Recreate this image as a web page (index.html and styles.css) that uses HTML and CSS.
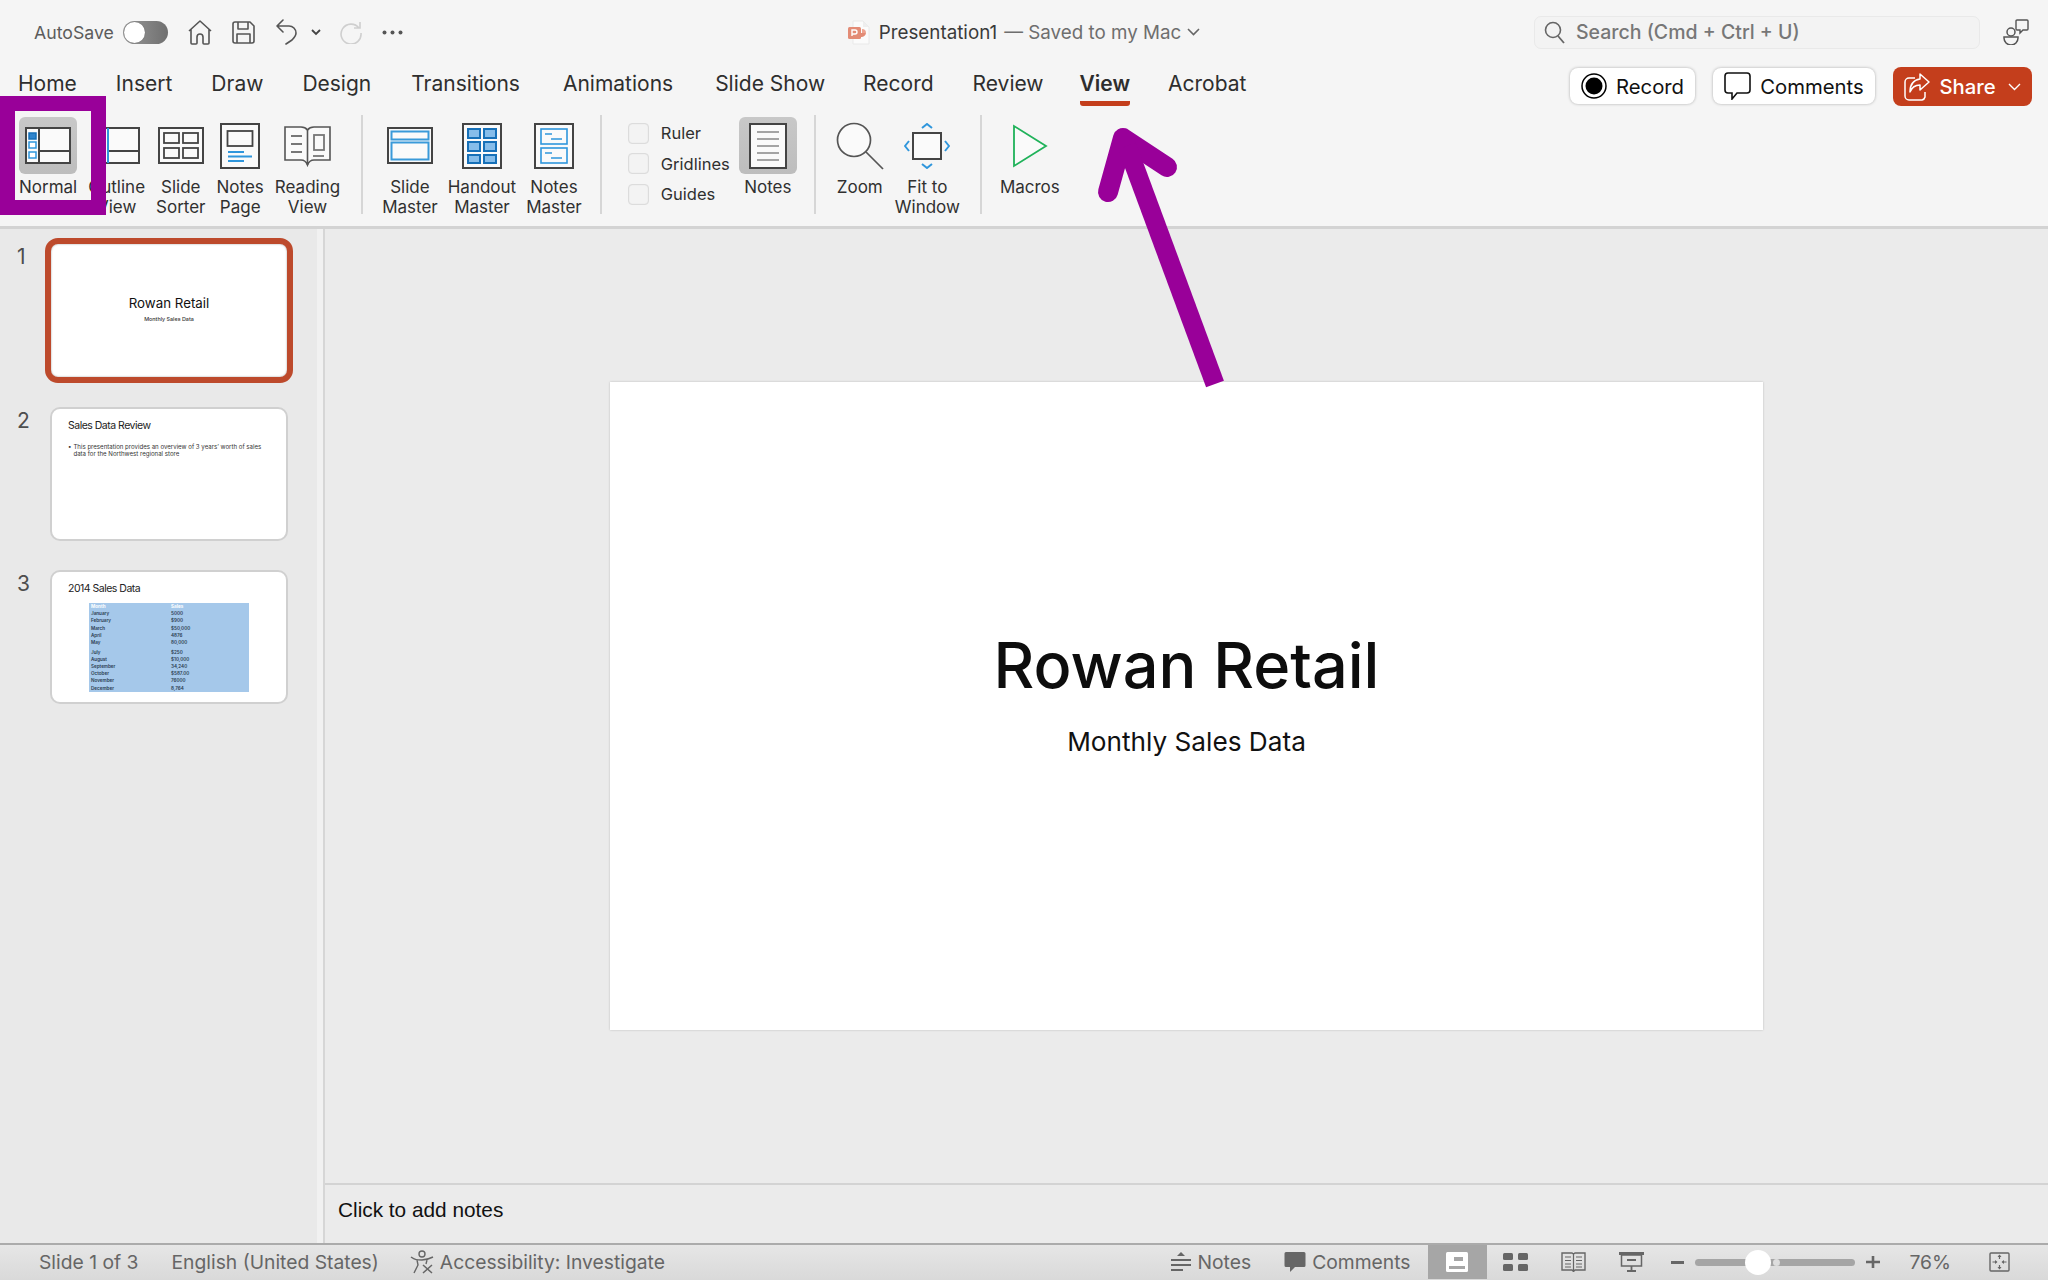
FILE: index.html
```html
<!DOCTYPE html>
<html lang="en">
<head>
<meta charset="utf-8">
<title>Presentation1</title>
<link rel="stylesheet" href="styles.css">
</head>
<body>
<div class="app">
  <header class="titlebar">
    <div class="tb-left">
      <span class="autosave">AutoSave</span>
      <span class="toggle"><span class="knob"></span></span>
      <svg class="ic" width="24" height="25" viewBox="0 0 24 25"><path d="M1 11 12 1l11 10M3 9v14a1 1 0 0 0 1 1h4a1 1 0 0 0 1-1v-6a3 3 0 0 1 6 0v6a1 1 0 0 0 1 1h4a1 1 0 0 0 1-1V9" fill="none" stroke="#555" stroke-width="1.6" stroke-linejoin="round"/></svg>
      <svg class="ic" width="23" height="23" viewBox="0 0 23 23"><path d="M3 1h15l4 4v15a2 2 0 0 1-2 2H3a2 2 0 0 1-2-2V3a2 2 0 0 1 2-2zM6 1v7h10V1M5 22v-9h13v9" fill="none" stroke="#555" stroke-width="1.6" stroke-linejoin="round"/></svg>
      <svg class="ic undo" width="23" height="26" viewBox="0 0 23 26"><path d="M8 1 2 7l6 6M2 7h12a7 7 0 0 1 7 7c0 3-2 5-4 7l-6 4" fill="none" stroke="#555" stroke-width="1.6" stroke-linecap="round" stroke-linejoin="round"/></svg>
      <svg class="ic undo-chev" width="10" height="7" viewBox="0 0 10 7"><path d="m1 1 4 4 4-4" fill="none" stroke="#444" stroke-width="1.8"/></svg>
      <svg class="ic" width="23" height="23" viewBox="0 0 23 23"><path d="M20 7a10 10 0 1 0 2 5M21 1v6h-6" fill="none" stroke="#cfcfcf" stroke-width="1.6"/></svg>
      <svg class="ic" width="21" height="5" viewBox="0 0 21 5"><circle cx="2.5" cy="2.5" r="2" fill="#555"/><circle cx="10.5" cy="2.5" r="2" fill="#555"/><circle cx="18.5" cy="2.5" r="2" fill="#555"/></svg>
    </div>
    <div class="tb-title">
      <svg class="ic" width="22" height="25" viewBox="0 0 22 25"><path d="M5 1h10l6 6v17H5z" fill="#fbfbfb" stroke="#e9e9e9"/><path d="M15 1v6h6" fill="#eee"/><rect x="0" y="7" width="13" height="12" rx="1.5" fill="#e38b75"/><path d="M4 16V10h3a2 2 0 0 1 0 4H4" fill="none" stroke="#fff" stroke-width="1.4"/><path d="M14 9a4 4 0 0 1 4 4h-4z" fill="#eda28f"/><path d="M13 13h5a4.500 4.500 0 0 1-5 4z" fill="#e38b75"/></svg>
      <span class="doc">Presentation1</span>
      <span class="saved">— Saved to my Mac</span>
      <svg class="ic" width="13" height="8" viewBox="0 0 13 8"><path d="m1 1 5.500 5.500L12 1" fill="none" stroke="#666" stroke-width="1.6"/></svg>
    </div>
    <div class="tb-right">
      <div class="search">
        <svg class="ic" width="21" height="23" viewBox="0 0 21 23"><circle cx="9" cy="9" r="7.500" fill="none" stroke="#666" stroke-width="1.600"/><path d="m14 15 6 7" stroke="#666" stroke-width="1.800"/></svg>
        <span>Search (Cmd + Ctrl + U)</span>
      </div>
      <svg class="ic" width="26" height="26" viewBox="0 0 26 26"><circle cx="8" cy="13" r="4" fill="none" stroke="#555" stroke-width="1.500"/><path d="M1 18h14v1a6.500 6.500 0 0 1-14 0z" fill="none" stroke="#555" stroke-width="1.500"/><path d="M14 1h10a1 1 0 0 1 1 1v8a1 1 0 0 1-1 1h-4l-3 3v-3h-3a1 1 0 0 1-1-1V2a1 1 0 0 1 1-1z" fill="none" stroke="#555" stroke-width="1.400"/></svg>
    </div>
  </header>

  <nav class="tabbar">
    <span class="tab">Home</span>
    <span class="tab">Insert</span>
    <span class="tab">Draw</span>
    <span class="tab">Design</span>
    <span class="tab tab-transitions">Transitions</span>
    <span class="tab tab-animations">Animations</span>
    <span class="tab tab-show">Slide Show</span>
    <span class="tab tab-record">Record</span>
    <span class="tab">Review</span>
    <span class="tab tab-view active">View</span>
    <span class="tab tab-acrobat">Acrobat</span>
    <div class="actions">
      <button class="act act-record">
        <svg width="26" height="26" viewBox="0 0 26 26"><circle cx="13" cy="13" r="12" fill="#fff" stroke="#000" stroke-width="1.500"/><circle cx="13" cy="13" r="8.500" fill="#000"/></svg>
        Record
      </button>
      <button class="act act-comments">
        <svg width="27" height="28" viewBox="0 0 27 28"><path d="M4 1h19a3 3 0 0 1 3 3v14a3 3 0 0 1-3 3H13l-5 6v-6H4a3 3 0 0 1-3-3V4a3 3 0 0 1 3-3z" fill="#fff" stroke="#111" stroke-width="1.600"/></svg>
        Comments
      </button>
      <button class="act act-share">
        <svg width="26" height="28" viewBox="0 0 26 28"><path d="M11 5H5a4 4 0 0 0-4 4v14a4 4 0 0 0 4 4h13a4 4 0 0 0 3-3v-5" fill="none" stroke="#fff" stroke-width="1.500"/><path d="M16 1v5C9 7 6 12 6 19c2-5 5-7 10-7v5l9-8z" fill="none" stroke="#fff" stroke-width="1.500" stroke-linejoin="round"/></svg>
        Share
        <svg class="share-chev" width="13" height="8" viewBox="0 0 13 8"><path d="m1 1 5.500 5.500L12 1" fill="none" stroke="#fff" stroke-width="1.400"/></svg>
      </button>
    </div>
  </nav>

  <section class="ribbon">
    <div class="rb-group">
      <div class="rb-btn">
        <div class="rb-icon on">
          <svg width="46" height="37" viewBox="0 0 46 37"><rect x="1" y="1" width="44" height="35" fill="#fafafa" stroke="#444" stroke-width="2"/><path d="M14 1v35M14 24h31" stroke="#444" stroke-width="2"/><rect x="4" y="6" width="7" height="6" fill="#2f84cc" stroke="#1670b8" stroke-width="1.500"/><rect x="4" y="15" width="7" height="6" fill="#fff" stroke="#2f96dc" stroke-width="1.500"/><rect x="4" y="25" width="7" height="6" fill="#fff" stroke="#2f96dc" stroke-width="1.500"/></svg>
        </div>
        <span class="rb-label">Normal</span>
      </div>
      <div class="rb-btn">
        <div class="rb-icon">
          <svg width="46" height="37" viewBox="0 0 46 37"><rect x="1" y="1" width="44" height="35" fill="#fafafa" stroke="#444" stroke-width="2"/><path d="M14 1v35" stroke="#2f96dc" stroke-width="2"/><path d="M15 24h30" stroke="#444" stroke-width="2"/></svg>
        </div>
        <span class="rb-label">Outline<br>View</span>
      </div>
      <div class="rb-btn">
        <div class="rb-icon">
          <svg width="46" height="37" viewBox="0 0 46 37"><rect x="1" y="1" width="44" height="35" fill="#fafafa" stroke="#444" stroke-width="2"/><g fill="#fafafa" stroke="#444" stroke-width="1.800"><rect x="6" y="6" width="15" height="10"/><rect x="25" y="6" width="15" height="10"/><rect x="6" y="21" width="15" height="10"/><rect x="25" y="21" width="15" height="10"/></g></svg>
        </div>
        <span class="rb-label">Slide<br>Sorter</span>
      </div>
      <div class="rb-btn">
        <div class="rb-icon">
          <svg width="40" height="46" viewBox="0 0 40 46"><rect x="1" y="1" width="38" height="44" fill="#fafafa" stroke="#444" stroke-width="2"/><rect x="7.500" y="8" width="25" height="15" fill="#fafafa" stroke="#444" stroke-width="1.800"/><path d="M8 29h16M8 33.500h24M8 38h16" stroke="#2f96dc" stroke-width="1.800"/></svg>
        </div>
        <span class="rb-label">Notes<br>Page</span>
      </div>
      <div class="rb-btn">
        <div class="rb-icon">
          <svg width="47" height="42" viewBox="0 0 47 42"><path d="M1 2h16c3 0 5 1 6.500 3C25 3 27 2 30 2h16v33H30c-3 0-5 1-6.500 5C22 36 20 35 17 35H1z" fill="#fafafa" stroke="#555" stroke-width="1.600"/><path d="M23.500 5v35" stroke="#555" stroke-width="1.600"/><path d="M7 11h11M7 19h11M7 27h11" stroke="#777" stroke-width="1.800"/><rect x="30" y="10" width="10" height="15" fill="#fafafa" stroke="#777" stroke-width="1.800"/><path d="M29 31h11" stroke="#777" stroke-width="1.800"/></svg>
        </div>
        <span class="rb-label">Reading<br>View</span>
      </div>
    </div>
    <div class="rb-sep"></div>
    <div class="rb-group rb-master">
      <div class="rb-btn">
        <div class="rb-icon">
          <svg width="46" height="37" viewBox="0 0 46 37"><rect x="1" y="1" width="44" height="35" fill="#fafafa" stroke="#444" stroke-width="2"/><g fill="#fafafa" stroke="#3a9ad9" stroke-width="2"><rect x="4.500" y="4.500" width="37" height="8"/><rect x="4.500" y="15.500" width="37" height="17"/></g></svg>
        </div>
        <span class="rb-label">Slide<br>Master</span>
      </div>
      <div class="rb-btn">
        <div class="rb-icon">
          <svg width="40" height="46" viewBox="0 0 40 46"><rect x="1" y="1" width="38" height="44" fill="#fafafa" stroke="#444" stroke-width="2"/><g fill="#86bdea" stroke="#1670b8" stroke-width="2"><rect x="6" y="6" width="12" height="9"/><rect x="22" y="6" width="12" height="9"/><rect x="6" y="19" width="12" height="9"/><rect x="22" y="19" width="12" height="9"/><rect x="6" y="32" width="12" height="8"/><rect x="22" y="32" width="12" height="8"/></g></svg>
        </div>
        <span class="rb-label">Handout<br>Master</span>
      </div>
      <div class="rb-btn">
        <div class="rb-icon">
          <svg width="40" height="46" viewBox="0 0 40 46"><rect x="1" y="1" width="38" height="44" fill="#fafafa" stroke="#444" stroke-width="2"/><g fill="#fafafa" stroke="#2f96dc" stroke-width="1.600"><rect x="7" y="6" width="26" height="15"/><rect x="7" y="25" width="26" height="15"/></g><path d="M11 11h7M17 16h11M11 30h7M17 35h11" stroke="#2f96dc" stroke-width="1.600"/></svg>
        </div>
        <span class="rb-label">Notes<br>Master</span>
      </div>
    </div>
    <div class="rb-sep"></div>
    <div class="rb-group rb-show">
      <div class="checks">
        <label class="check"><span class="box"></span>Ruler</label>
        <label class="check"><span class="box"></span>Gridlines</label>
        <label class="check"><span class="box"></span>Guides</label>
      </div>
      <div class="rb-btn">
        <div class="rb-icon on">
          <svg width="38" height="46" viewBox="0 0 38 46"><rect x="1" y="1" width="36" height="44" fill="#fafafa" stroke="#444" stroke-width="2"/><path d="M8 9h22M8 16h22M8 23h22M8 30h22M8 37h22" stroke="#888" stroke-width="1.600"/></svg>
        </div>
        <span class="rb-label">Notes</span>
      </div>
    </div>
    <div class="rb-sep"></div>
    <div class="rb-group rb-zoom">
      <div class="rb-btn">
        <div class="rb-icon">
          <svg width="48" height="48" viewBox="0 0 48 48"><circle cx="18" cy="18" r="16.500" fill="#fafafa" stroke="#555" stroke-width="1.700"/><path d="m30 30 17 17" stroke="#555" stroke-width="1.700"/></svg>
        </div>
        <span class="rb-label">Zoom</span>
      </div>
      <div class="rb-btn">
        <div class="rb-icon">
          <svg width="46" height="46" viewBox="0 0 46 46"><rect x="9" y="10" width="28" height="26" fill="#fafafa" stroke="#444" stroke-width="2"/><path d="m18 5 5-4 5 4M18 41l5 4 5-4M5 18l-4 5 4 5M41 18l4 5-4 5" fill="none" stroke="#2f96dc" stroke-width="2"/></svg>
        </div>
        <span class="rb-label">Fit to<br>Window</span>
      </div>
    </div>
    <div class="rb-sep"></div>
    <div class="rb-group rb-macro">
      <div class="rb-btn">
        <div class="rb-icon">
          <svg width="36" height="44" viewBox="0 0 36 44"><path d="M2 2v40l32-20z" fill="#fafafa" stroke="#20b25a" stroke-width="1.800"/></svg>
        </div>
        <span class="rb-label">Macros</span>
      </div>
    </div>
  </section>

  <main class="workspace">
    <aside class="panel">
      <div class="thumb-row">
        <span class="thumb-num">1</span>
        <div class="thumb thumb-selected">
          <div class="t1"><div class="t1-title">Rowan Retail</div><div class="t1-sub">Monthly Sales Data</div></div>
        </div>
      </div>
      <div class="thumb-row">
        <span class="thumb-num">2</span>
        <div class="thumb">
          <div class="t2-title">Sales Data Review</div>
          <div class="t2-body"><span class="t2-dot">•</span><span>This presentation provides an overview of 3 years’ worth of sales data for the Northwest regional store</span></div>
        </div>
      </div>
      <div class="thumb-row">
        <span class="thumb-num">3</span>
        <div class="thumb">
          <div class="t2-title">2014 Sales Data</div>
          <div class="t3-table">
            <span class="th">Month</span><span class="th">Sales</span>
            <span>January</span><span>5000</span>
            <span>February</span><span>$900</span>
            <span>March</span><span>$50,000</span>
            <span>April</span><span>4876</span>
            <span>May</span><span>80,000</span>
            <span class="gap">July</span><span class="gap">$250</span>
            <span>August</span><span>$10,000</span>
            <span>September</span><span>34,240</span>
            <span>October</span><span>$587.00</span>
            <span>November</span><span>76000</span>
            <span>December</span><span>8,764</span>
          </div>
        </div>
      </div>
    </aside>
    <div class="content">
      <div class="stage">
        <div class="slide">
          <div class="slide-title">Rowan Retail</div>
          <div class="slide-sub">Monthly Sales Data</div>
        </div>
      </div>
      <div class="notes">Click to add notes</div>
    </div>
  </main>

  <footer class="status">
    <span class="st-slide">Slide 1 of 3</span>
    <span class="st-lang">English (United States)</span>
    <span class="st-acc">
      <svg width="25" height="24" viewBox="0 0 25 24"><circle cx="12" cy="4" r="3" fill="none" stroke="#666" stroke-width="1.400"/><path d="M1 7c4 3 6 3 11 3s7-1 11-3M7 10l1 5-4 8M17 10l-1 4" fill="none" stroke="#666" stroke-width="1.400"/><path d="m13 15 9 8M22 15l-9 8" stroke="#666" stroke-width="1.500"/></svg>
      Accessibility: Investigate
    </span>
    <div class="st-right">
      <span class="st-item">
        <svg width="22" height="20" viewBox="0 0 22 20"><path d="m7 4 4-4 4 4z" fill="#666"/><path d="M1 8h20M1 13h20M1 18h12" stroke="#666" stroke-width="2"/></svg>
        Notes
      </span>
      <span class="st-item st-comments">
        <svg width="22" height="20" viewBox="0 0 22 20"><path d="M2 0h18a1.500 1.500 0 0 1 1.500 1.500v12a1.500 1.500 0 0 1-1.500 1.500H11l-5 5v-5H2a1.500 1.500 0 0 1-1.500-1.500v-12A1.500 1.500 0 0 1 2 0z" fill="#666"/></svg>
        Comments
      </span>
      <span class="st-view st-on">
        <svg width="22" height="20" viewBox="0 0 22 20"><rect width="22" height="20" rx="1.500" fill="#fff"/><rect x="8" y="5" width="9" height="4" fill="#a6a6a6"/><rect x="3" y="14" width="16" height="3" fill="#a6a6a6"/></svg>
      </span>
      <span class="st-view">
        <svg width="25" height="18" viewBox="0 0 25 18"><rect x="0" y="0" width="10" height="7" rx="1.500" fill="#666"/><rect x="15" y="0" width="10" height="7" rx="1.500" fill="#666"/><rect x="0" y="11" width="10" height="7" rx="1.500" fill="#666"/><rect x="15" y="11" width="10" height="7" rx="1.500" fill="#666"/></svg>
      </span>
      <span class="st-view">
        <svg width="25" height="20" viewBox="0 0 25 20"><path d="M1 1h10l1.500 1L14 1h10v17H14l-1.500 1.500L11 18H1z" fill="none" stroke="#666" stroke-width="1.400"/><path d="M12.500 2v17M4 5h6M4 8.500h6M4 12h6M4 15h6M15 5h6M15 8.500h6M15 12h6M15 15h6" stroke="#666" stroke-width="1.200"/></svg>
      </span>
      <span class="st-view">
        <svg width="25" height="20" viewBox="0 0 25 20"><rect x="0" y="0" width="25" height="3" fill="#666"/><rect x="2.500" y="3" width="20" height="11" fill="none" stroke="#666" stroke-width="1.500"/><path d="M8 8h9M12.500 14v5M8 19h9" stroke="#666" stroke-width="1.800"/></svg>
      </span>
      <svg class="z-minus" width="13" height="3" viewBox="0 0 13 3"><rect width="13" height="3" fill="#666"/></svg>
      <span class="slider"><span class="slider-mid"></span><span class="slider-knob"></span></span>
      <svg class="z-plus" width="14" height="12" viewBox="0 0 14 12"><path d="M7 0v12M0 6h14" stroke="#666" stroke-width="2.600"/></svg>
      <span class="st-pct">76%</span>
      <svg class="z-fit" width="21" height="20" viewBox="0 0 21 20"><rect x="1" y="1" width="19" height="18" rx="1" fill="none" stroke="#666" stroke-width="1.400"/><path d="M10.500 3v4M10.500 13v4M3.500 10h4M13.500 10h4" stroke="#666" stroke-width="1.200"/><path d="m8.500 5 2-2.500 2 2.500zM8.500 15l2 2.500 2-2.500zM6 8l2.500 2L6 12zM15 8l-2.500 2 2.500 2z" fill="#666"/></svg>
    </div>
  </footer>

  <div class="callout-box"></div>
  <svg class="callout-arrow" width="140" height="270" viewBox="0 0 140 270"><path d="M17 72 32 18l44 29" fill="none" stroke="#990099" stroke-width="20" stroke-linecap="round" stroke-linejoin="round"/><path d="M36 26l88 238" fill="none" stroke="#990099" stroke-width="19"/></svg>
</div>
</body>
</html>
```

FILE: styles.css
```css
* { box-sizing: border-box; }
html, body { margin: 0; padding: 0; }
body {
  width: 2048px;
  height: 1280px;
  overflow: hidden;
  background: #f5f5f5;
  font-family: Inter, "Liberation Sans", sans-serif;
  color: #2b2b2b;
}
.app { position: relative; display: flex; flex-direction: column; width: 2048px; height: 1280px; }
.ic { display: block; flex: none; }

/* Title bar */
.titlebar {
  height: 64px;
  flex: none;
  display: grid;
  grid-template-columns: 1fr auto 1fr;
  align-items: center;
}
.tb-left { display: flex; align-items: center; gap: 20px; padding-left: 34px; }
.autosave { font-size: 17.700px; color: #5c5c5c; margin-right: -11px; }
.toggle { position: relative; width: 45px; height: 23px; border-radius: 12px; background: linear-gradient(90deg, #999, #6f6f6f); }
.knob { position: absolute; left: 1px; top: 1px; width: 21px; height: 21px; border-radius: 50%; background: #fff; box-shadow: 0 0 1px #555; }
.undo { margin-right: -7px; }
.undo-chev { margin-right: -2px; }
.tb-title { display: flex; align-items: center; font-size: 18.800px; }
.doc { color: #3a3a3a; margin-left: 9px; }
.saved { color: #6e6e6e; margin-left: 7px; margin-right: 6px; }
.tb-right { display: flex; align-items: center; justify-content: flex-end; gap: 23px; padding-right: 19px; }
.search {
  width: 446px;
  height: 33px;
  display: flex;
  align-items: center;
  gap: 11px;
  padding-left: 9px;
  background: #f3f3f3;
  border: 1px solid #e9e9e9;
  border-radius: 7px;
  color: #777;
  font-size: 19.500px;
  font-weight: 500;
}

/* Tabs */
.tabbar { height: 44px; flex: none; display: flex; align-items: flex-start; padding-left: 18px; gap: 39px; }
.tab {
  padding-top: 8px;
  padding-bottom: 5px;
  height: 42px;
  font-size: 21px;
  line-height: 24px;
  color: #2e2e2e;
  border-bottom: 5px solid transparent;
}
.tab.active { font-weight: 600; border-bottom-color: #c43e1c; border-radius: 0 0 3px 3px; }
.tab-transitions { margin-left: 1px; }
.tab-animations { margin-left: 4px; }
.tab-show { margin-left: 3px; }
.tab-record { margin-left: -1px; }
.tab-view { margin-left: -3px; }
.tab-acrobat { margin-left: -1px; }
.actions { margin-left: auto; padding-right: 16px; display: flex; align-items: flex-start; gap: 18px; padding-top: 3px; }
.act {
  display: flex;
  align-items: center;
  justify-content: center;
  gap: 9px;
  height: 36px;
  margin-top: 1px;
  border: 0;
  border-radius: 8px;
  background: #fff;
  box-shadow: 0 0 3px #aaa;
  font: 400 20.300px Inter, "Liberation Sans", sans-serif;
  color: #111;
  padding: 0;
}
.act-record { width: 125px; }
.act-comments { width: 162px; }
.act-share { width: 139px; height: 39px; margin-top: 0; background: #c43e1c; color: #fff; box-shadow: none; font-weight: 500; }
.share-chev { margin-left: 3px; }

/* Ribbon */
.ribbon {
  height: 121px;
  flex: none;
  display: flex;
  align-items: flex-start;
  padding: 9px 0 0 19px;
  border-bottom: 3px solid #d3d3d3;
}
.rb-group { display: flex; gap: 11px; }
.rb-btn { display: flex; flex-direction: column; align-items: center; }
.rb-icon { height: 57px; display: flex; align-items: center; justify-content: center; border-radius: 6px; }
.rb-icon svg { flex: none; }
.rb-icon.on { width: 58px; background: linear-gradient(#c8c8c8, #bdbdbd); }
.rb-label { margin-top: 4px; font-size: 17px; line-height: 19.500px; text-align: center; color: #303030; white-space: nowrap; }
.rb-sep { width: 2px; height: 99px; margin: -2px 19px 0 21px; background: #d6d6d6; flex: none; }
.rb-master { gap: 10px; margin-right: -3px; }
.rb-show { gap: 0; margin-right: -4px; }
.checks { display: flex; flex-direction: column; gap: 8.500px; padding: 5px 0 0 7px; width: 118px; }
.check { display: flex; align-items: center; gap: 12px; height: 22px; font-size: 16.500px; color: #303030; }
.box { width: 21px; height: 21px; border: 1px solid #dcdcdc; border-radius: 4px; background: #f3f3f3; box-shadow: inset 0 0 1px #ccc; flex: none; }
.rb-zoom { gap: 11px; margin: 0 -1px 0 1px; }
.rb-macro { margin-left: -1px; }

/* Workspace */
.workspace { flex: 1; display: flex; min-height: 0; background: #ebebeb; }
.panel { width: 325px; flex: none; padding: 14px 0 0 17px; background: #e9e9e9; border-right: 2px solid #d6d6d6; box-shadow: inset -6px 0 0 #f1f1f1; }
.thumb-row { display: flex; height: 163.500px; }
.thumb-num { width: 33px; font-size: 21px; line-height: 24px; color: #4e4e4e; padding-top: 2px; }
.thumb {
  width: 238px;
  height: 134px;
  background: #fff;
  border: 2px solid #d0d0d0;
  border-radius: 10px;
  overflow: hidden;
}
.thumb-selected { display: flex; align-items: center; justify-content: center; width: 248px; height: 145px; margin: -5px 0 0 -5px; border: 6px solid #bd4a2c; border-radius: 13px; box-shadow: inset 0 0 2px #999; }
.t1 { text-align: center; padding-bottom: 4px; }
.t1-title { font-size: 13.300px; line-height: 18px; color: #111; }
.t1-sub { margin-top: 2px; font-size: 5.400px; line-height: 10px; color: #333; font-weight: 500; }
.t2-title { font-size: 10.500px; letter-spacing: -0.500px; line-height: 16px; color: #222; margin: 9px 0 0 16px; }
.t2-body { display: flex; gap: 2px; margin: 9px 20px 0 16px; font-size: 6.100px; line-height: 7px; color: #333; }
.t2-dot { flex: none; }
.t3-table {
  display: grid;
  grid-template-columns: 80px 80px;
  width: 160px;
  margin: 6px 0 0 37px;
  padding: 0 0 0 2px;
  background: #a5c8ea;
  font-size: 4.600px;
  line-height: 7.200px;
  color: #2a3b50;
  font-weight: 600;
}
.t3-table .th { color: #fff; font-weight: 700; }
.t3-table .gap { padding-top: 2.400px; line-height: 7.200px; }

/* Main content */
.content { flex: 1; display: flex; flex-direction: column; min-width: 0; }
.stage { flex: 1; display: flex; align-items: center; justify-content: center; min-height: 0; }
.slide {
  width: 1153px;
  height: 648px;
  background: #fff;
  box-shadow: 0 0 2px #bbb;
  display: flex;
  flex-direction: column;
  align-items: center;
  padding-top: 243px;
}
.slide-title { font-size: 63px; font-weight: 450; line-height: 80px; color: #0d0d0d; }
.slide-sub { margin-top: 19px; font-size: 26.200px; line-height: 36px; color: #111; }
.notes {
  height: 60px;
  flex: none;
  border-top: 2px solid #d3d3d3;
  display: flex;
  align-items: center;
  padding: 0 0 8px 13px;
  font-family: "Liberation Sans", Arial, sans-serif;
  font-size: 20.800px;
  color: #111;
}

/* Status bar */
.status {
  height: 37px;
  flex: none;
  display: flex;
  align-items: center;
  border-top: 2px solid #ababab;
  background: linear-gradient(#e6e6e6, #d9d9d9);
  font-size: 19.300px;
  color: #666;
  padding: 0 0 1px 39px;
}
.st-lang { margin-left: 33px; }
.st-acc { margin-left: 31px; display: flex; align-items: center; gap: 5px; }
.st-right { margin-left: auto; display: flex; align-items: center; height: 100%; padding-right: 38px; }
.st-item { display: flex; align-items: center; gap: 6px; }
.st-comments { margin: 0 17px 0 33px; }
.st-view { display: flex; align-items: center; justify-content: center; width: 58px; height: 100%; }
.st-on { background: #a6a6a6; width: 59px; }
.z-minus { margin-left: 10px; }
.slider { position: relative; width: 160px; height: 7px; margin: 0 11px; border-radius: 4px; background: #a5a5a5; }
.slider-mid { position: absolute; left: 78px; top: 0; width: 7px; height: 7px; border-radius: 50%; background: #ddd; }
.slider-knob { position: absolute; left: 50px; top: -9px; width: 26px; height: 25px; border-radius: 50%; background: #fff; }
.st-pct { margin-left: 30px; margin-right: 38px; }
.z-fit { flex: none; }

/* Callouts drawn over the window */
.callout-box { position: absolute; left: 0; top: 96px; width: 106px; height: 119px; border: 15px solid #990099; }
.callout-arrow { position: absolute; left: 1091px; top: 120px; }
```
